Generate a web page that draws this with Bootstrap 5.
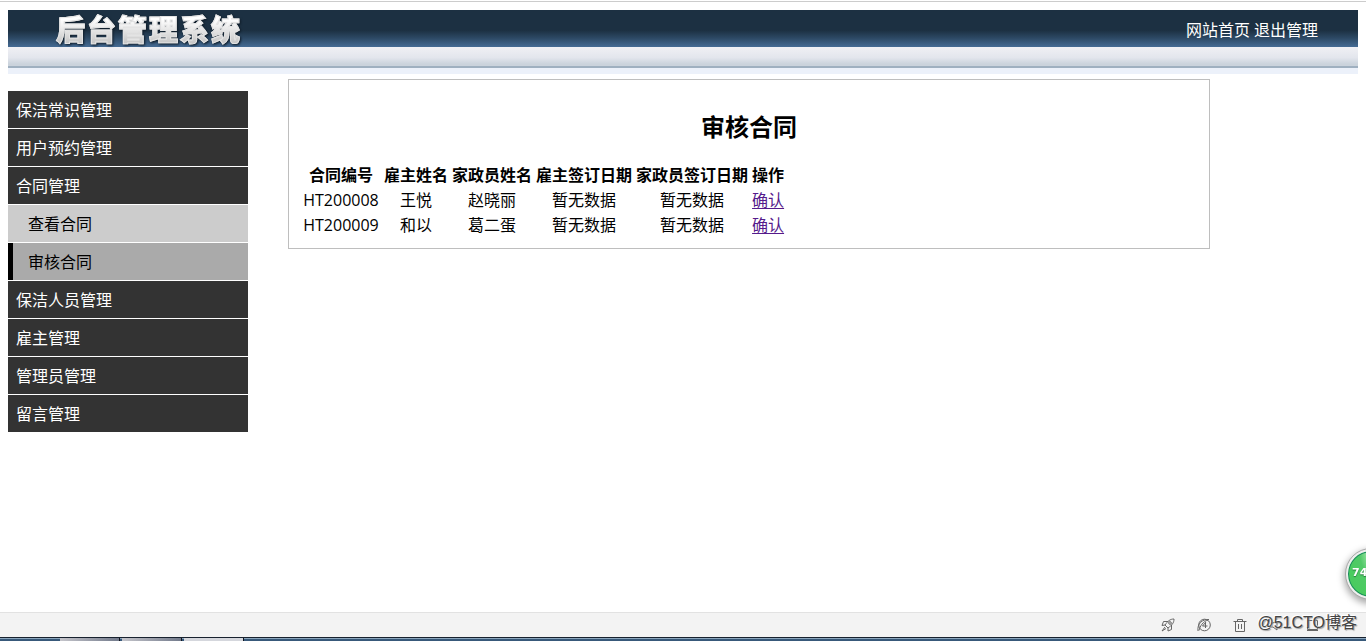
<!DOCTYPE html>
<html lang="zh-CN">
<head>
<meta charset="utf-8">
<meta name="viewport" content="width=device-width, initial-scale=1">
<title>后台管理系统</title>
<link href="https://cdn.jsdelivr.net/npm/bootstrap@5.3.0/dist/css/bootstrap.min.css" rel="stylesheet">
<style>
  body { font: 16px/21px "Open Sans", "Noto Sans CJK SC", sans-serif; color: #000; background: #fff; border-top: 1px solid #fff; }
  .page-main { border-top: 1px solid #ccc; padding: 8px 8px 0; }
  .bar-dark { height: 37px; padding: 0 40px 0 48px; background: linear-gradient(#1c3042 0, #1c3042 55%, #2c4863 75%, #456b94 100%); }
  .bar-light { height: 21px; background: linear-gradient(#f0f0f4, #e3e6ed 55%, #cbd3dc 90%); border-bottom: 2px solid #9fb0c0; }
  .bar-pale { height: 6px; background: #ecf1fa; }
  .brand { font: 900 29px/36px "Noto Sans CJK SC", sans-serif; margin: 0; padding-bottom: 2px; background: linear-gradient(#fff 25%, #c4c4c4 90%); -webkit-background-clip: text; background-clip: text; color: transparent; -webkit-text-stroke: 1px #e4e4e4; paint-order: stroke fill; filter: drop-shadow(1px 1px 1px #0d1a26); }
  .brand span { display: inline-block; width: 31px; }
  .top-links { gap: 4px; padding-top: 4px; }
  .top-links a { color: #fff; text-decoration: none; }
  .side-menu { width: 240px; margin-top: 17px; }
  .side-menu a { display: block; padding: 9px 8px 7px; margin-bottom: 1px; color: #fff; background: #333; text-decoration: none; }
  .side-menu .sub-item { color: #000; background: #ccc; padding-left: 20px; }
  .side-menu .current { background: #aaa; border-left: 5px solid #000; padding-left: 15px; }
  .panel { margin: 5px 148px 20px 0; padding: 10px; border: 1px solid #bebebe; }
  .panel h2 { font-size: 24px; line-height: 31px; font-weight: 700; margin: 21px 0 19px; text-align: center; }
  .contracts { border-collapse: separate; border-spacing: 2px; text-align: center; white-space: nowrap; }
  .contracts th, .contracts td { padding: 2px 1px 0; }
  .contracts th { text-align: center; font-weight: 700; }
  .contracts th:first-child { min-width: 80px; }
  .contracts a { color: #551a8b; text-underline-offset: 2px; }
  .status-bar { height: 25px; background: #f3f3f3; border-top: 1px solid #e2e2e2; padding-right: 9px; }
  .status-bar svg { width: 16px; height: 16px; fill: none; stroke: #666; stroke-width: 1; }
  .icon-btn { border: 0; background: none; padding: 0; width: 36px; height: 24px; display: flex; align-items: center; justify-content: center; }
  .credit { position: absolute; right: 9px; top: -1px; line-height: 22px; font-family: "Liberation Sans", "Noto Sans CJK SC", sans-serif; color: #444; text-shadow: -1px -1px 0 #fff, 1px 1px 1px #999; white-space: nowrap; }
  .status-icons { margin-right: 27px; }
  .task-strip { height: 4px; padding-left: 60px; gap: 2px; background: linear-gradient(#18212e 0 1px, #8aa5bc 1px 2px, #38597a 2px); }
  .task-strip i { width: 60px; height: 3px; margin-top: 1px; background: linear-gradient(90deg, #c5c5cb, #737b8c); border-right: 1px solid #10151f; }
  .task-strip i:last-child { background: #d5d7dd; }
  .speed-ball { position: fixed; right: -30px; bottom: 42px; width: 50px; height: 50px; padding: 0 0 2px 4px; border: 2px solid #eee; outline: 1px solid #aaa; border-radius: 50%; text-align: left; font: 700 11px/14px "DejaVu Sans", sans-serif; color: #fff; background: radial-gradient(ellipse at 50% 0, #b6f0bb 0, #52c968 35%, #4acb5f 70%); box-shadow: inset 0 0 0 1px #16875d, 0 3px 7px 2px #aaa; text-shadow: 0 1px 1px #247a3a; }
</style>
</head>
<body class="d-flex flex-column min-vh-100">
<div class="page-main flex-grow-1">
  <header>
    <div class="bar-dark d-flex justify-content-between align-items-center">
      <h1 class="brand"><span>后</span><span>台</span><span>管</span><span>理</span><span>系</span><span>统</span></h1>
      <nav class="top-links d-flex"><a href="#">网站首页</a><a href="#">退出管理</a></nav>
    </div>
    <div class="bar-light"></div>
    <div class="bar-pale"></div>
  </header>
  <div class="d-flex align-items-start">
    <nav class="side-menu flex-shrink-0 me-3">
      <a href="#">保洁常识管理</a>
      <a href="#">用户预约管理</a>
      <a href="#">合同管理</a>
      <a href="#" class="sub-item">查看合同</a>
      <a href="#" class="sub-item current" aria-current="page">审核合同</a>
      <a href="#">保洁人员管理</a>
      <a href="#">雇主管理</a>
      <a href="#">管理员管理</a>
      <a href="#">留言管理</a>
    </nav>
    <main class="panel flex-grow-1 ms-4">
      <h2>审核合同</h2>
      <table class="contracts">
        <thead><tr><th>合同编号</th><th>雇主姓名</th><th>家政员姓名</th><th>雇主签订日期</th><th>家政员签订日期</th><th>操作</th></tr></thead>
        <tbody>
          <tr><td>HT200008</td><td>王悦</td><td>赵晓丽</td><td>暂无数据</td><td>暂无数据</td><td><a href="#">确认</a></td></tr>
          <tr><td>HT200009</td><td>和以</td><td>葛二蛋</td><td>暂无数据</td><td>暂无数据</td><td><a href="#">确认</a></td></tr>
        </tbody>
      </table>
    </main>
  </div>
</div>
<footer>
  <div class="status-bar position-relative d-flex justify-content-end align-items-center">
    <div class="status-icons d-flex">
      <button class="icon-btn" type="button" aria-label="加速"><svg viewBox="0 0 16 16"><path d="M14 2c-4 0-6 2-9 6l3 3c4-3 6-5 6-9zM8 4.500H3.500L2 8.500l3-.5M11.500 8v4.500l-3.500 1.500V11M5 10l-3 4 4-2.500"/><circle cx="10" cy="6" r="1.300"/></svg></button>
      <button class="icon-btn" type="button" aria-label="浏览"><svg viewBox="0 0 16 16"><path d="M2 14C1 7 6 2 13 2.500M3 13.500C4 9 7 4.500 12 3"/><circle cx="8.500" cy="8" r="5.800"/><path d="M10 5L6.500 9h5M9.500 6v5"/></svg></button>
      <button class="icon-btn" type="button" aria-label="清理"><svg viewBox="0 0 16 16"><path d="M1.500 4.500h13M5.500 4V2.500h5V4M3.500 4.500v10h9v-10M6.500 7v5M9.500 7v5"/></svg></button>
      <button class="icon-btn" type="button" aria-label="声音"><svg viewBox="0 0 16 16"><path d="M2 6h3l4-3v10l-4-3H2zM11 5q3 3 0 6"/></svg></button>
      <button class="icon-btn" type="button" aria-label="窗口"><svg viewBox="0 0 16 16"><path d="M3.500 3.500h10v9h-10zM3 13.500h11"/></svg></button>
    </div>
    <span class="credit">@51CTO博客</span>
  </div>
  <div class="task-strip d-flex"><i></i><i></i><i></i></div>
</footer>
<button class="speed-ball" type="button">74</button>
<script src="https://cdn.jsdelivr.net/npm/bootstrap@5.3.0/dist/js/bootstrap.bundle.min.js"></script>
</body>
</html>
